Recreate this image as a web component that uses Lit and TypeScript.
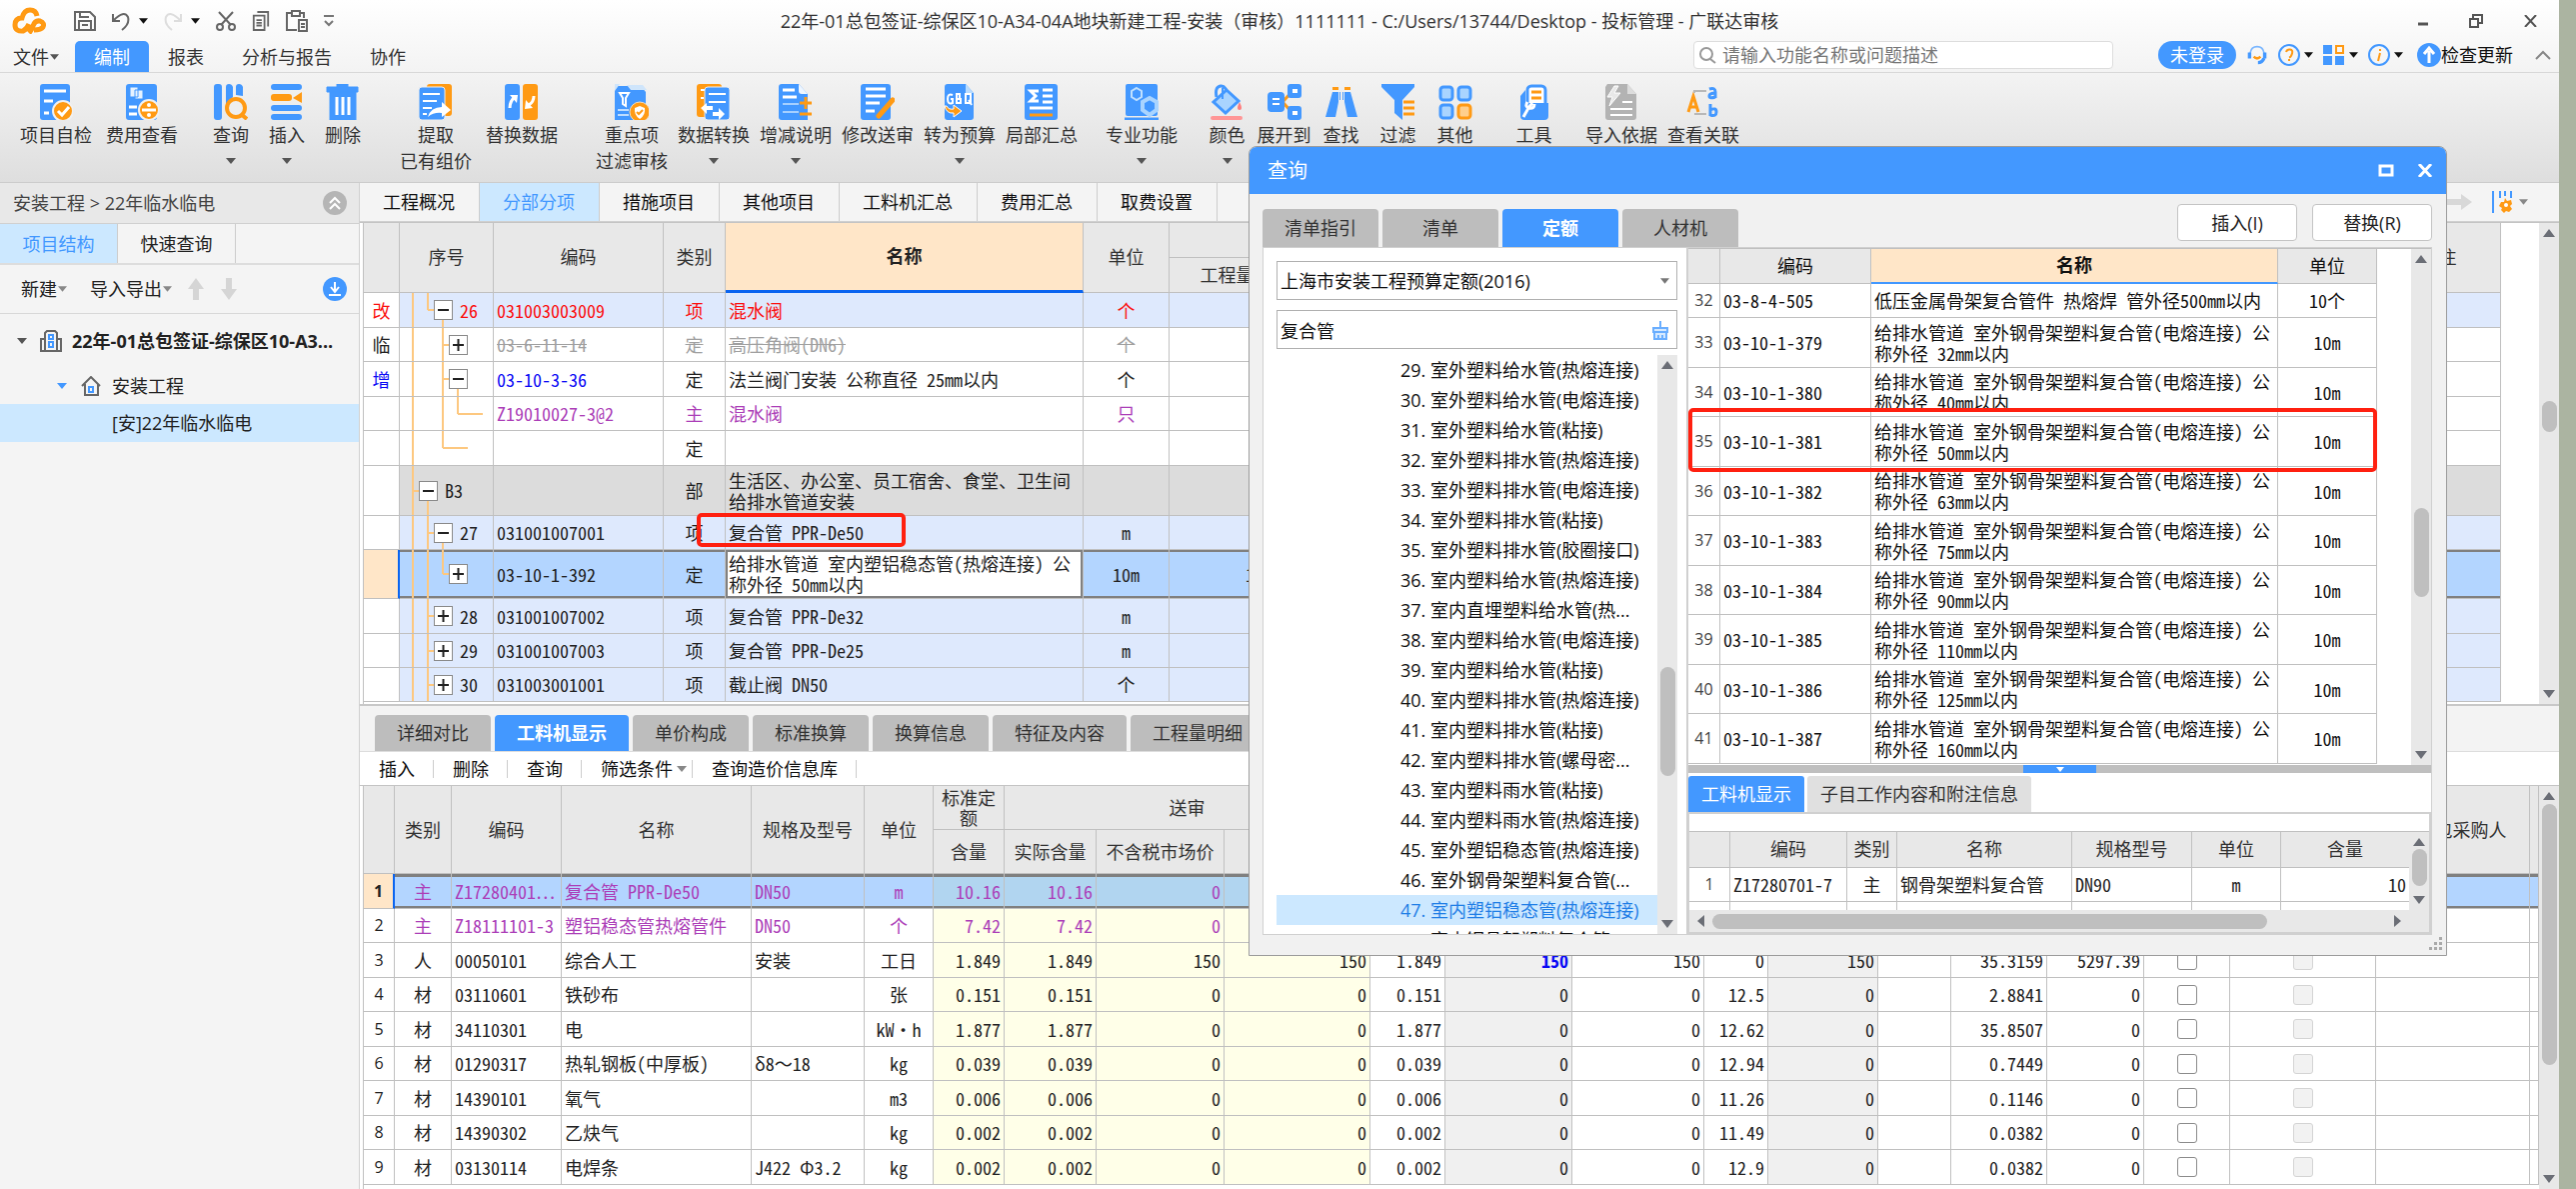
import { LitElement, html, svg, css, nothing } from "lit";
import type { TemplateResult, SVGTemplateResult } from "lit";
import { customElement } from "lit/decorators.js";
import { classMap } from "lit/directives/class-map.js";
import { styleMap } from "lit/directives/style-map.js";

const B = "#4398ff";
const O = "#ff9a14";

const base = css`
  *, *::before, *::after { box-sizing: border-box; }
  :host {
    --blue: #4398ff;
    --line: #c0c0c0;
    --pale: #cce8ff;
    --head: #e8e8e8;
    font: 18px/26px "Open Sans", "Noto Sans CJK SC", sans-serif;
    color: #222;
  }
  button, input, select {
    font: inherit;
    color: inherit;
    margin: 0;
    padding: 0;
    border: 0;
    background: none;
    white-space: nowrap;
  }
  svg { display: block; flex: none; }
  table { border-collapse: separate; border-spacing: 0; table-layout: fixed; width: 100%; }
  th, td {
    border-right: 1px solid var(--line);
    border-bottom: 1px solid var(--line);
    padding: 0 3px;
    line-height: 21px;
    overflow: hidden;
    text-align: left;
  }
  th { background: var(--head); font-weight: 400; text-align: center; color: #333; }
  td { font-family: "Noto Sans Mono CJK SC", "Noto Sans CJK SC", monospace; background: #fff; }
  .center { text-align: center; }
  .right { text-align: right; }
  .vscroll {
    width: 20px;
    flex: none;
    display: flex;
    flex-direction: column;
    align-items: center;
    background: #e8e8e8;
    padding: 6px 0;
  }
  .thumb { background: #bfbfbf; border-radius: 8px; width: 15px; }
`;

const caret = (c = "#555") =>
  html`<svg width="10" height="6" viewBox="0 0 10 6"><path d="M0 0h10L5 6z" fill=${c} /></svg>`;

const smallCaret = (c: string) =>
  html`<svg width="9" height="6" viewBox="0 0 10 6"><path d="M0 0h10L5 6z" fill=${c} /></svg>`;

const vscroll = (before: number, size: number, after: number) => html`
  <div class="vscroll">
    <svg width="12" height="8" viewBox="0 0 12 8"><path d="M0 8h12L6 0z" fill="#6b6e76" /></svg>
    <div style=${styleMap({ flex: `${before} 0 0` })}></div>
    <div class="thumb" style=${styleMap({ flex: `${size} 0 0` })}></div>
    <div style=${styleMap({ flex: `${after} 0 0` })}></div>
    <svg width="12" height="8" viewBox="0 0 12 8"><path d="M0 0h12L6 8z" fill="#6b6e76" /></svg>
  </div>`;

const cols = (widths: (number | null)[]) => html`<colgroup>
  ${widths.map((w) => (w === null ? html`<col />` : html`<col style=${styleMap({ width: `${w}px` })} />`))}
</colgroup>`;

/* ---------- ribbon ---------- */

const glyphs: Record<string, SVGTemplateResult> = {
  check: svg`<rect x="1" width="30" height="36" rx="3" fill=${B}/><path d="M5 7h22M5 17h9M5 29h5" stroke="#fff" stroke-width="3"/><circle cx="24" cy="27" r="10" fill=${O} stroke="#f0f0f0" stroke-width="2"/><path d="M19 27l4 4 7-8" fill="none" stroke="#fff" stroke-width="3"/>`,
  cost: svg`<rect x="1" width="31" height="36" rx="3" fill=${B}/><path d="M5 3h8v10H5zM10 6h8v9h-8z" fill="#e6f2ff" stroke=${B}/><path d="M4 23h8M4 30h8" stroke="#fff" stroke-width="3"/><circle cx="24" cy="26" r="10" fill=${O} stroke="#f0f0f0" stroke-width="2"/><path d="M17 26h14" stroke="#fff" stroke-width="3"/><circle cx="24" cy="21" r="2" fill="#fff"/><circle cx="24" cy="31" r="2" fill="#fff"/>`,
  query: svg`<rect width="8" height="36" rx="3" fill=${B}/><path d="M12 3q0-3 3-3t4 3v10l-7 8zM22 3q0-3 3-3t4 3v9l-7-1z" fill=${B}/><circle cx="22" cy="24" r="9" fill="#eee" stroke=${O} stroke-width="4"/><path d="M27 30l6 5" stroke=${O} stroke-width="4"/>`,
  insert: svg`<rect x="1" width="31" height="6" rx="3" fill=${B}/><rect x="1" y="10" width="21" height="7" rx="3" fill=${O}/><path d="M23 14l9-6v11z" fill=${O}/><rect x="1" y="21" width="31" height="6" rx="3" fill=${B}/><rect x="1" y="30" width="31" height="6" rx="3" fill=${B}/>`,
  trash: svg`<path d="M1 3h10V0h11v3h10v5H1zM4 8h26v28H4z" fill=${B} stroke=${B} stroke-linejoin="round"/><path d="M11 13v18M17 13v18M23 13v18" stroke="#fff" stroke-width="3"/>`,
  extract: svg`<rect x="8" width="25" height="32" rx="3" fill=${O}/><rect y="3" width="26" height="33" rx="3" fill=${B} stroke="#eee"/><path d="M4 10h17M4 17h14M4 24h9M4 30h4" stroke="#fff" stroke-width="2"/><path d="M9 33q3-10 14-10v-5l9 8-9 7v-4q-8-1-14 4z" fill="#fff"/>`,
  swap: svg`<rect width="15" height="36" rx="3" fill=${B}/><rect x="18" width="15" height="36" rx="3" fill=${O}/><path d="M5 24q0-7 5-11" stroke="#fff" stroke-width="3" fill="none"/><path d="M5 11l8 0-1 8zM20 25l1-9 7 8z" fill="#fff"/><path d="M29 12q0 6-5 9" stroke="#fff" stroke-width="3" fill="none"/>`,
  filterDoc: svg`<path d="M0 2h26l5 6v28H0z" fill=${B}/><path d="M12 1h16l4 5H16zM0 0h5L0 7z" fill="#cfe5fb"/><path d="M5 9h9l-3 5v8l-3-2v-6z" fill="none" stroke="#fff" stroke-width="2"/><path d="M3 26h11M3 31h11" stroke="#bcdcff" stroke-width="2"/><circle cx="25" cy="28" r="10" fill=${O} stroke="#f4dcb8"/><path d="M25 22l5 2q1 7-5 11-6-4-5-11z" fill="#fff"/><path d="M22 28l2 2 4-4" stroke=${O} stroke-width="2" fill="none"/>`,
  convert: svg`<rect width="25" height="33" rx="3" fill=${O}/><path d="M4 6h5M4 14h3" stroke="#fff" stroke-width="2"/><rect x="8" y="3" width="25" height="33" rx="3" fill=${B} stroke="#eee"/><path d="M12 10h17M12 18h17" stroke="#fff" stroke-width="2"/><path d="M4 24l6-5v3h6v4h-6v4zM28 30l-6-6v4h-6v4h6v4z" fill="#fff"/>`,
  plusminus: svg`<path d="M3 0h17l9 10v26H3q-3 0-3-3V3q0-3 3-3z" fill=${B}/><path d="M20 0l9 10h-6q-3 0-3-3z" fill="#eef6ff"/><path d="M4 6h12M4 13h14" stroke="#fff" stroke-width="3"/><path d="M4 20h16M4 28h16" stroke="#a5cfff" stroke-width="2"/><path d="M21 19h12M27 13v12M21 30h12" stroke=${O} stroke-width="3"/>`,
  edit: svg`<rect width="30" height="36" rx="3" fill=${B}/><path d="M5 5h20M5 12h20M5 19h14M5 27h9" stroke="#fff" stroke-width="3"/><path d="M18 32L32 16" stroke=${O} stroke-width="5" stroke-linecap="round"/>`,
  gbq: svg`<path d="M5 0h18l8 9v24q0 3-3 3H5q-3 0-3-3V3q0-3 3-3z" fill=${B}/><path d="M23 0l8 9h-8z" fill="#b8dcff"/><path d="M10 11q-5-2-5 4t5 4v-4H8M14 10v9h4v-4h-4 3v-5zM23 10h5v9h-5zM26 16l3 5" fill="none" stroke="#fff" stroke-width="2"/><path d="M2 22q2 8 9 7v4l8-6-8-6v4q-5 1-7-3z" fill=${O} stroke="#fff"/>`,
  sum: svg`<rect width="33" height="36" rx="3" fill=${B}/><path d="M14 7H6l5 5-5 5h8" fill="none" stroke="#fff" stroke-width="3"/><path d="M18 6h10M18 12h10M18 18h10M5 24h23" stroke="#fff" stroke-width="3"/><path d="M5 31h23" stroke=${O} stroke-width="3"/>`,
  gears: svg`<rect x="1" width="32" height="32" rx="2" fill=${B}/><path d="M0 35h34" stroke=${B} stroke-width="3"/><path d="M12 4l5 3v6l-5 3-5-3V7z" fill="none" stroke="#bfe0ff" stroke-width="2"/><path d="M25 14l7 4v8l-7 5-7-5v-8z" fill=${B} stroke="#a9d4ff" stroke-width="4"/>`,
  paint: svg`<path d="M6 13q-2-10 4-11t7 11" fill="none" stroke=${B} stroke-width="3"/><path d="M16 6l12 11-13 12L3 18z" fill="#a9d4ff" stroke=${B} stroke-width="3"/><path d="M12 4v11" stroke=${B} stroke-width="2"/><path d="M29 18q4 8 0 8t0-8z" fill="#ff7d7d"/><rect y="32" width="32" height="4" rx="2" fill="#ff9696"/>`,
  expand: svg`<path d="M16 17l8-9M16 19l8 9" stroke=${O} stroke-width="3"/><rect y="8" width="17" height="20" rx="4" fill=${B}/><path d="M5 15h7M5 20h7" stroke="#fff" stroke-width="2"/><rect x="20" width="14" height="14" rx="3" fill=${B}/><rect x="20" y="22" width="14" height="14" rx="3" fill=${B}/><path d="M25 5h5v4h-5zM25 27h5v4h-5z" fill="#fff"/>`,
  find: svg`<path d="M8 3h6v3H8zM20 3h6v3h-6z" fill=${O}/><path d="M8 8h6v10l-3 15H1zM26 8h-6v10l3 15h10zM15 8h1v8h-1zM18 8h1v8h-1z" fill=${B}/>`,
  funnel: svg`<path d="M0 0h33v3L21 16v20l-8-7V16L0 3z" fill=${B}/><path d="M22 18h11M22 24h11M22 30h11" stroke=${O} stroke-width="3"/>`,
  four: svg`<rect x="2" y="3" width="12" height="13" rx="3" fill="#a9d4ff" stroke=${B} stroke-width="3"/><rect x="20" y="3" width="12" height="13" rx="3" fill="#a9d4ff" stroke=${B} stroke-width="3"/><rect x="2" y="21" width="12" height="13" rx="3" fill="#a9d4ff" stroke=${B} stroke-width="3"/><rect x="20" y="21" width="12" height="13" rx="3" fill="#ffcf8c" stroke=${O} stroke-width="3"/>`,
  tool: svg`<rect x="10" y="2" width="18" height="24" rx="4" fill="#fff" stroke=${B} stroke-width="3"/><path d="M14 8h10M14 14h10" stroke=${O} stroke-width="3"/><path d="M3 12l5-6v13h23v13q0 4-4 4H7q-4 0-4-4z" fill=${B}/><path d="M15 19l-4 5-5 9M10 18q-3 5 2 6t5-4" fill="none" stroke="#fff" stroke-width="3"/>`,
  basis: svg`<path d="M3 0h20l9 10v23q0 3-3 3H4q-3 0-3-3V3z" fill="#b3b3b3"/><path d="M23 0l9 10h-9z" fill="#dcdcdc"/><path d="M10 2L3 13h5l-3 9 11-13h-6l4-7z" fill="#e8e8e8" stroke="#fff"/><path d="M18 18h10M6 25h22M6 31h22" stroke="#fff" stroke-width="2"/>`,
  relate: svg`<path d="M2 28l5-16 5 16M4 23h7" fill="none" stroke=${O} stroke-width="3"/><path d="M8 9V7h12M8 30h12" fill="none" stroke="#b8b8b8" stroke-width="2"/><path d="M23 5q6-2 6 3v6M29 9q-6 0-6 3t6 1M24 20v12M24 26q6-3 6 2t-6 3" fill="none" stroke=${B} stroke-width="3"/>`,
};

type Tool = [string, string, string?];
const ribbon: { cell: number; gap: number; tools: Tool[] }[] = [
  { cell: 86, gap: 13, tools: [["check", "项目自检"], ["cost", "费用查看"]] },
  { cell: 56, gap: 18, tools: [["query", "查询", "▾"], ["insert", "插入", "▾"], ["trash", "删除"]] },
  { cell: 86, gap: 22, tools: [["extract", "提取", "已有组价"], ["swap", "替换数据"]] },
  { cell: 82, gap: 26, tools: [["filterDoc", "重点项", "过滤审核"], ["convert", "数据转换", "▾"], ["plusminus", "增减说明", "▾"], ["edit", "修改送审"], ["gbq", "转为预算", "▾"], ["sum", "局部汇总"]] },
  { cell: 82, gap: 18, tools: [["gears", "专业功能", "▾"]] },
  { cell: 57, gap: 16, tools: [["paint", "颜色", "▾"], ["expand", "展开到"], ["find", "查找"], ["funnel", "过滤"], ["four", "其他"]] },
  { cell: 57, gap: 22, tools: [["tool", "工具"]] },
  { cell: 82, gap: 18, tools: [["basis", "导入依据"], ["relate", "查看关联"]] },
];

@customElement("app-header")
export class AppHeader extends LitElement {
  static styles = [base, css`
    :host { display: block; }
    .top { background: linear-gradient(#fff, #f3f3f3); height: 73px; border-bottom: 1px solid #d8d8d8; }
    .titlebar { display: grid; grid-template-columns: 1fr auto 1fr; height: 41px; align-items: center; }
    .quick { display: flex; align-items: center; padding-left: 12px; }
    .quick svg { margin-right: 16px; }
    .quick .logo { margin-right: 28px; }
    .quick .near { margin-right: 9px; }
    .title { color: #333; }
    .win { display: flex; justify-content: flex-end; align-items: center; gap: 41px; padding-right: 22px; }
    .menubar { display: flex; height: 31px; align-items: stretch; }
    .menu { padding: 0 19px; display: flex; align-items: center; color: #333; }
    .menu.file { padding: 0 16px 0 13px; gap: 1px; width: 75px; }
    .menu.on { background: var(--blue); color: #fff; border-radius: 5px 5px 0 0; }
    .fill { flex: 1; }
    .search { display: flex; align-items: center; gap: 6px; width: 420px; height: 28px; background: #fff; border: 1px solid #ddd; border-radius: 4px; padding-left: 4px; }
    .search input { flex: 1; outline: 0; }
    .search input::placeholder { color: #777; opacity: 1; }
    .right-tools { display: flex; align-items: center; gap: 10px; height: 28px; padding: 0 8px 0 45px; }
    .pair { display: flex; align-items: center; gap: 4px; }
    .login { background: var(--blue); color: #fff; border-radius: 14px; height: 28px; width: 78px; }
    .update { display: flex; align-items: center; margin-left: 4px; color: #111; }
    .fold { margin-left: 12px; }
    .ribbon { background: linear-gradient(#f3f3f3, #dedede); height: 110px; border-bottom: 1px solid #ccc; display: flex; padding-top: 11px; }
    .group { display: flex; }
    .tool { display: flex; flex-direction: column; align-items: center; color: #333; }
    .tool svg { margin-bottom: 2px; }
    .tool .down { padding-top: 10px; }
  `];

  render() {
    return html`
      <header class="top">
        <div class="titlebar">
          <div class="quick">
            <svg class="logo" width="34" height="27" viewBox="0 0 34 27"><path d="M12 24Q3 25 3 18q0-7 7-7Q12 3 18 3q6 0 7 6M11 24q4-2 6-7M17 26q3-3 4-7 2-6 7-5 5 2 3 6-2 3-9 3" fill="none" stroke=${O} stroke-width="5"/></svg>
            <svg width="22" height="20" viewBox="0 0 22 20" fill="none" stroke="#666" stroke-width="2"><path d="M1 1h15l5 5v13H1zM6 1v5h9M5 19v-9h12v9M8 14h6"/></svg>
            <svg class="near" width="18" height="20" viewBox="0 0 18 20" fill="none" stroke="#666" stroke-width="2"><path d="M1 3v7h7M2 9Q12-1 16 6q2 7-6 13"/></svg>
            ${smallCaret("#111")}
            <svg class="near" width="18" height="20" viewBox="0 0 18 20" fill="none" stroke="#ddd" stroke-width="2"><path d="M17 3v7h-7M16 9Q6-1 2 6q-2 7 6 13"/></svg>
            ${smallCaret("#111")}
            <svg width="20" height="20" viewBox="0 0 20 20" fill="none" stroke="#666" stroke-width="2"><path d="M3 1l12 13M17 1L5 14"/><circle cx="4" cy="16" r="3"/><circle cx="16" cy="16" r="3"/></svg>
            <svg width="18" height="22" viewBox="0 0 20 22" fill="none" stroke="#666" stroke-width="2"><path d="M6 1h12v16M2 5h12v16H2zM5 10h6M5 13h6M5 16h6"/></svg>
            <svg width="22" height="23" viewBox="0 0 22 23" fill="none" stroke="#666" stroke-width="2"><path d="M5 4H1v17h10M6 2h8v5H6zM14 4h4v5M13 11h8v11h-8zM15 15h4M15 18h4"/></svg>
            <svg width="10" height="12" viewBox="0 0 10 12" fill="none" stroke="#777" stroke-width="2"><path d="M0 1h10M1 6l4 4 4-4"/></svg>
          </div>
          <div class="title">22年-01总包签证-综保区10-A34-04A地块新建工程-安装（审核）1111111 - C:/Users/13744/Desktop - 投标管理 - 广联达审核</div>
          <div class="win">
            <button aria-label="最小化"><svg width="10" height="14" viewBox="0 0 10 14"><path d="M0 10h10" stroke="#555" stroke-width="3"/></svg></button>
            <button aria-label="还原"><svg width="14" height="14" viewBox="0 0 14 14" fill="none" stroke="#555" stroke-width="2"><path d="M4 4V1h9v8h-3M1 5h8v8H1z"/></svg></button>
            <button aria-label="关闭"><svg width="13" height="12" viewBox="0 0 13 12" stroke="#555" stroke-width="2"><path d="M1 0l11 12M12 0L1 12"/></svg></button>
          </div>
        </div>
        <nav class="menubar">
          <button class="menu file">文件${smallCaret("#555")}</button>
          <button class="menu on">编制</button>
          <button class="menu">报表</button>
          <button class="menu">分析与报告</button>
          <button class="menu">协作</button>
          <div class="fill"></div>
          <label class="search">
            <svg width="18" height="18" viewBox="0 0 18 18" fill="none" stroke="#999" stroke-width="2"><circle cx="8" cy="8" r="6"/><path d="M12 13l5 4"/></svg>
            <input placeholder="请输入功能名称或问题描述" aria-label="搜索功能" />
          </label>
          <div class="right-tools">
            <button class="login">未登录</button>
            <svg width="22" height="22" viewBox="0 0 26 24" fill="none"><path d="M5 15V9Q6 2 13 2t8 7v6" stroke="#7ab6ff" stroke-width="2"/><path d="M4 9v7M22 9v7M21 16q-2 5-7 5" stroke=${B} stroke-width="4"/><path d="M9 14q4 4 8 0" stroke=${O} stroke-width="3"/></svg>
            <div class="pair">
              <svg width="22" height="22" viewBox="0 0 22 22" fill="none"><circle cx="11" cy="11" r="10" stroke=${B} stroke-width="2"/><path d="M8 8q1-3 4-2.500t2 4-3 4M11 15v2" stroke=${O} stroke-width="2"/></svg>
              ${smallCaret("#111")}
            </div>
            <div class="pair">
              <svg width="22" height="20" viewBox="0 0 22 20"><path d="M0 0h9v9H0zM0 11h9v9H0zM12 11h9v9h-9z" fill=${B}/><path d="M13 1h7v7h-7z" fill="none" stroke=${O} stroke-width="2"/></svg>
              ${smallCaret("#111")}
            </div>
            <div class="pair">
              <svg width="22" height="22" viewBox="0 0 22 22" fill="none"><circle cx="11" cy="11" r="10" stroke=${B} stroke-width="2"/><path d="M12 5v2M12 9l-2 8" stroke=${O} stroke-width="2"/></svg>
              ${smallCaret("#111")}
            </div>
            <button class="update"><svg width="24" height="26" viewBox="0 0 24 26"><circle cx="12" cy="13" r="12" fill=${B}/><path d="M12 21V9M7 12l5-6 5 6" stroke="#fff" stroke-width="3" fill="none"/></svg>检查更新</button>
            <svg class="fold" width="16" height="10" viewBox="0 0 16 10"><path d="M1 9l7-7 7 7" fill="none" stroke="#888" stroke-width="2"/></svg>
          </div>
        </nav>
      </header>
      <div class="ribbon">
        ${ribbon.map((g) => html`<div class="group" style=${styleMap({ marginLeft: `${g.gap}px` })}>
          ${g.tools.map(([icon, name, extra]) => html`<button class="tool" style=${styleMap({ width: `${g.cell}px` })}>
            <svg width="34" height="36" viewBox="0 0 34 36">${glyphs[icon]}</svg>
            <span>${name}</span>
            ${extra === "▾" ? html`<span class="down">${caret()}</span>` : extra ? html`<span>${extra}</span>` : nothing}
          </button>`)}
        </div>`)}
      </div>`;
  }
}

@customElement("app-side")
export class AppSide extends LitElement {
  static styles = [base, css`
    :host { display: flex; flex-direction: column; width: 360px; flex: none; background: #f4f4f4; border-right: 1px solid #d0d0d0; }
    .crumb { height: 40px; background: #e8e8e8; display: flex; align-items: center; justify-content: space-between; padding: 0 11px 0 13px; color: #444; }
    .tabs { display: flex; height: 42px; border-top: 1px solid #d0d0d0; border-bottom: 2px solid #ddd; }
    .tabs button { width: 118px; border-right: 1px solid #ccc; }
    .tabs .on { background: var(--pale); color: var(--blue); }
    .bar { height: 49px; display: flex; align-items: center; padding: 0 11px 0 21px; border-bottom: 1px solid #d8d8d8; }
    .bar button { display: flex; align-items: center; gap: 1px; margin-right: 23px; }
    .bar .arrow { margin-right: 15px; }
    .bar .data { margin-right: 15px; }
    .bar .go { margin: 0 0 0 auto; }
    .node { display: flex; align-items: center; height: 36px; color: #222; }
    .root { height: 54px; padding-left: 17px; font-weight: 700; }
    .root svg:last-of-type { margin: 0 10px 0 13px; }
    .unit { padding-left: 57px; }
    .unit svg:last-of-type { margin: 0 10px 0 14px; }
    .leaf { height: 38px; padding-left: 112px; background: var(--pale); }
  `];

  render() {
    return html`
      <div class="crumb">安装工程 &gt; 22年临水临电
        <svg width="25" height="25" viewBox="0 0 25 25"><circle cx="12" cy="12" r="12" fill="#b5b5b5"/><path d="M7 12l5-5 5 5M7 18l5-5 5 5" fill="none" stroke="#fff" stroke-width="2"/></svg>
      </div>
      <div class="tabs"><button class="on">项目结构</button><button>快速查询</button></div>
      <div class="bar">
        <button>新建${smallCaret("#888")}</button>
        <button class="data">导入导出${smallCaret("#888")}</button>
        <svg class="arrow" width="18" height="22" viewBox="0 0 18 22"><path d="M9 0l8 11h-5v11H6V11H1z" fill="#d5d5d5"/></svg>
        <svg class="arrow" width="18" height="22" viewBox="0 0 18 22"><path d="M9 22l8-11h-5V0H6v11H1z" fill="#d5d5d5"/></svg>
        <svg class="go" width="25" height="25" viewBox="0 0 25 25"><circle cx="12" cy="12" r="12" fill=${B}/><path d="M12 5v9M8 10l4 5 4-5M6 18h12" fill="none" stroke="#fff" stroke-width="2"/></svg>
      </div>
      <div class="node root">
        ${caret()}
        <svg width="22" height="22" viewBox="0 0 22 22" fill="none" stroke="#666" stroke-width="2"><path d="M5 21V3l2-2h8l2 2v18M1 21V9h4M17 9h4v12M0 21h22"/><path d="M9 5h4v4H9zM9 12h4v5H9z" stroke=${B}/></svg>
        22年-01总包签证-综保区10-A3...
      </div>
      <div class="node unit">
        ${caret(B)}
        <svg width="21" height="20" viewBox="0 0 21 20" fill="none" stroke="#666" stroke-width="2"><path d="M1 10l9-9 9 9M4 8v11h13V8"/><path d="M8 11h4v5H8z" stroke=${B}/></svg>
        安装工程
      </div>
      <div class="node leaf">[安]22年临水临电</div>`;
  }
}

/* ---------- item grid ---------- */

interface Item {
  h: number;
  tone?: string;
  mark?: string;
  ink?: string;
  codeInk?: string;
  markInk?: string;
  full: number[];
  end?: number;
  arm?: [number, number];
  box?: [number, string];
  drop?: number;
  no?: string;
  code?: string;
  kind: string;
  name?: string;
  unit?: string;
  qty?: string;
}

const items: Item[] = [
  { h: 35, tone: "blue", mark: "改", markInk: "red", ink: "red", full: [13], end: 28, arm: [28, 34], box: [43, "−"], drop: 43, no: "26", code: "031003003009", kind: "项", name: "混水阀", unit: "个" },
  { h: 34, mark: "临", ink: "struck", full: [13, 43], arm: [43, 49], box: [58, "+"], code: "03-6-11-14", kind: "定", name: "高压角阀(DN6)", unit: "个" },
  { h: 35, mark: "增", markInk: "navy", codeInk: "navy", full: [13, 43], arm: [43, 49], box: [58, "−"], drop: 58, code: "03-10-3-36", kind: "定", name: "法兰阀门安装 公称直径 25mm以内", unit: "个" },
  { h: 34, ink: "purple", full: [13, 43], end: 58, arm: [58, 83], code: "Z19010027-3@2", kind: "主", name: "混水阀", unit: "只" },
  { h: 35, full: [13], end: 43, arm: [43, 68], kind: "定" },
  { h: 50, tone: "gray", full: [13], arm: [13, 19], box: [28, "−"], drop: 28, no: "B3", kind: "部", name: "生活区、办公室、员工宿舍、食堂、卫生间给排水管道安装" },
  { h: 34, tone: "blue", full: [13, 28], arm: [28, 34], box: [43, "−"], drop: 43, no: "27", code: "031001007001", kind: "项", name: "复合管 PPR-De50", unit: "m" },
  { h: 49, tone: "sel", full: [13, 28], end: 43, arm: [43, 49], box: [58, "+"], code: "03-10-1-392", kind: "定", name: "给排水管道 室内塑铝稳态管(热熔连接) 公称外径 50mm以内", unit: "10m", qty: "1.00" },
  { h: 35, tone: "blue", full: [13, 28], arm: [28, 34], box: [43, "+"], no: "28", code: "031001007002", kind: "项", name: "复合管 PPR-De32", unit: "m" },
  { h: 34, tone: "blue", full: [13, 28], arm: [28, 34], box: [43, "+"], no: "29", code: "031001007003", kind: "项", name: "复合管 PPR-De25", unit: "m" },
  { h: 34, tone: "blue", full: [13, 28], arm: [28, 34], box: [43, "+"], no: "30", code: "031003001001", kind: "项", name: "截止阀 DN50", unit: "个" },
];

function branch(r: Item): TemplateResult {
  const mid = Math.floor(r.h / 2);
  const d = [
    ...r.full.map((x) => `M${x} 0V${r.h}`),
    r.end ? `M${r.end} 0V${mid}` : "",
    r.arm ? `M${r.arm[0]} ${mid}H${r.arm[1]}` : "",
    r.drop ? `M${r.drop} ${mid}V${r.h}` : "",
  ].join("");
  return html`<div class="tree" style=${styleMap({ height: `${r.h - 1}px`, paddingLeft: r.box ? `${r.box[0] - 9}px` : "0" })}>
    <svg class="lines" width="94" height=${r.h} viewBox="0 0 94 ${r.h}"><path d=${d} fill="none" stroke="#fdc880" stroke-width="2"/></svg>
    ${r.box ? html`<button class="box" aria-label=${r.box[1] === "+" ? "展开" : "折叠"}>
      <svg width="17" height="18" viewBox="0 0 17 18"><path d=${r.box[1] === "+" ? "M3 9h11M8.500 3v12" : "M3 9h11"} stroke="#222" stroke-width="2"/></svg></button>` : nothing}
    ${r.no ? html`<span class="no">${r.no}</span>` : nothing}
  </div>`;
}

/* ---------- resource grid ---------- */

const resources: string[][] = [
  ["主", "Z17280401…", "复合管 PPR-De50", "DN50", "m", "10.16", "10.16", "0", "", "", "", "", "", "", "", "", ""],
  ["主", "Z18111101-3", "塑铝稳态管热熔管件", "DN50", "个", "7.42", "7.42", "0", "", "", "", "", "", "", "", "", ""],
  ["人", "00050101", "综合人工", "安装", "工日", "1.849", "1.849", "150", "150", "1.849", "150", "150", "0", "150", "", "35.3159", "5297.39"],
  ["材", "03110601", "铁砂布", "", "张", "0.151", "0.151", "0", "0", "0.151", "0", "0", "12.5", "0", "", "2.8841", "0"],
  ["材", "34110301", "电", "", "kW·h", "1.877", "1.877", "0", "0", "1.877", "0", "0", "12.62", "0", "", "35.8507", "0"],
  ["材", "01290317", "热轧钢板(中厚板)", "δ8～18", "kg", "0.039", "0.039", "0", "0", "0.039", "0", "0", "12.94", "0", "", "0.7449", "0"],
  ["材", "14390101", "氧气", "", "m3", "0.006", "0.006", "0", "0", "0.006", "0", "0", "11.26", "0", "", "0.1146", "0"],
  ["材", "14390302", "乙炔气", "", "kg", "0.002", "0.002", "0", "0", "0.002", "0", "0", "11.49", "0", "", "0.0382", "0"],
  ["材", "03130114", "电焊条", "J422 Φ3.2", "kg", "0.002", "0.002", "0", "0", "0.002", "0", "0", "12.9", "0", "", "0.0382", "0"],
];

@customElement("app-workspace")
export class AppWorkspace extends LitElement {
  static styles = [base, css`
    :host { display: flex; flex-direction: column; flex: 1; min-width: 0; background: #fff; }
    .tabs { display: flex; height: 39px; flex: none; background: #f4f4f4; border-bottom: 1px solid #d0d0d0; }
    .tabs button { padding: 0 24px 0 23px; border-right: 1px solid #ccc; color: #111; }
    .tabs .on { background: var(--pale); color: var(--blue); }
    .tabs .side { margin-left: auto; display: flex; align-items: center; gap: 19px; padding-right: 31px; }
    .tabs .view { display: flex; align-items: center; gap: 5px; }
    .area { display: flex; padding-left: 3px; border-top: 1px solid #c4c4c4; overflow: hidden; }
    .area .grid { flex: 1; min-width: 0; border-left: 1px solid var(--line); }
    .items { height: 484px; flex: none; border-bottom: 2px solid #c8c8c8; }
    .items .grid { margin-right: 38px; }
    th.name { background: #ffe6c8; font-weight: 700; border-bottom: 3px solid #0a64f0; color: #222; }
    .blue td { background: #dee9fd; }
    .gray td { background: #dcdcdc; }
    tr td.mark { background: #fff; }
    tr.sel td { background: #b3d5ff; box-shadow: inset 0 2px #808080, inset 0 -2px #808080; }
    tr.sel td.mark { background: #ffe6c8; box-shadow: none; border-right: 2px solid #0a64f0; }
    tr.sel td.title { background: #fff; box-shadow: inset 0 0 0 2px #808080; }
    td.mark { padding: 0; text-align: center; }
    .red { color: #fb1010; }
    .navy { color: #0b0bf5; }
    .purple { color: #ac3fb8; }
    .struck { color: #a0a0a0; text-decoration: line-through; }
    td.branch { padding: 0; }
    .tree { position: relative; display: flex; align-items: center; }
    .lines { position: absolute; left: 0; top: 0; }
    .box { position: relative; width: 19px; height: 20px; border: 1px solid #8a8a8a; background: #fff; }
    .no { margin-left: 7px; }
    .subtabs { background: #f3f3f3; flex: none; display: flex; gap: 4px; padding: 9px 0 0 15px; height: 46px; border-bottom: 1px solid #ddd; }
    .subtabs button { background: #bdbdbd; border-radius: 4px 4px 0 0; padding: 0 22px; color: #333; }
    .subtabs .on { background: var(--blue); color: #fff; font-weight: 700; }
    .bar { height: 33px; flex: none; display: flex; align-items: center; }
    .bar button { display: flex; align-items: center; gap: 4px; padding: 0 18px 0 19px; color: #111; border-right: 1px solid #ccc; height: 18px; line-height: 18px; }
    .bar .menu { padding-right: 5px; }
    .res { flex: 1; min-height: 0; }
    .res th { line-height: 20px; }
    .res td.idx { text-align: center; font-family: "Open Sans", "Noto Sans CJK SC", sans-serif; font-size: 16px; padding: 0; }
    .res tr.first td { background: #b3d5ff; box-shadow: inset 0 3px #808080, inset 0 -2px #808080; }
    .res tr.first td.pale { background: #b1d5f0; }
    .res tr.first td.idx { background: #ffe6c8; box-shadow: none; font-weight: 700; border-right: 2px solid #0a64f0; }
    .res td.pale { background: #ffffe8; }
    .res td.shade { background: #f0f0f0; }
    .res td.strong { color: #0b0bf5; font-weight: 700; }
    td input { appearance: none; display: block; margin: 0 auto; width: 20px; height: 20px; border: 1px solid #8c8c8c; border-radius: 3px; background: #fff; }
    td input:disabled { border-color: #d4d4d4; background: #f2f2f2; }
  `];

  private resource(r: string[], i: number) {
    const h = i % 2 ? 34 : 35;
    return html`<tr class=${i === 0 ? "first" : ""} style=${styleMap({ height: `${h}px` })}>
      <td class="idx">${i + 1}</td>
      ${r.map((v, c) => html`<td class=${classMap({
        purple: i < 2,
        center: c === 0 || c === 4,
        right: c > 4,
        pale: c > 4 && c < 9,
        shade: c === 10 || c === 13,
        strong: c === 10 && v === "150",
      })}>${v}</td>`)}
      <td><input type="checkbox" aria-label="选择第${i + 1}行" /></td>
      <td><input type="checkbox" disabled aria-label="第${i + 1}行锁定" /></td>
      <td></td><td></td>
    </tr>`;
  }

  render() {
    const tabs = ["工程概况", "分部分项", "措施项目", "其他项目", "工料机汇总", "费用汇总", "取费设置"];
    const sub = ["详细对比", "工料机显示", "单价构成", "标准换算", "换算信息", "特征及内容", "工程量明细"];
    return html`
      <div class="tabs">
        ${tabs.map((t, i) => html`<button class=${i === 1 ? "on" : ""}>${t}</button>`)}
        <div class="side">
          <svg width="34" height="18" viewBox="0 0 34 18"><path d="M8 6h14V1l11 8-11 8v-5H8z" fill="#d8d8d8"/></svg>
          <div class="view">
            <svg width="22" height="22" viewBox="0 0 22 22"><path d="M1 0v22M8 0v7M13 0v5M19 0v7" stroke=${B} stroke-width="2"/><path d="M13 7l2 3 4-1 1 4-2 2 2 3-3 3-3-1-2 2-3-3 1-2-3-2 2-4 3 0z" fill=${O}/><circle cx="14" cy="14" r="2" fill="#fff"/></svg>
            ${smallCaret("#888")}
          </div>
        </div>
      </div>
      <div class="area items">
        <div class="grid"><table>
          ${cols([36, 94, 170, 62, 358, 86, 116, null, 124])}
          <thead>
            <tr style=${styleMap({ height: "35px" })}>
              <th rowspan="2"></th><th rowspan="2">序号</th><th rowspan="2">编码</th><th rowspan="2">类别</th>
              <th rowspan="2" class="name">名称</th><th rowspan="2">单位</th><th></th><th rowspan="2"></th><th rowspan="2">备注</th>
            </tr>
            <tr style=${styleMap({ height: "35px" })}><th>工程量</th></tr>
          </thead>
          <tbody>
            ${items.map((r) => html`<tr class=${r.tone ?? ""} style=${styleMap({ height: `${r.h}px` })}>
              <td class="mark ${r.markInk ?? ""}">${r.mark ?? ""}</td>
              <td class="branch ${r.ink === "red" ? "red" : ""}">${branch(r)}</td>
              <td class=${r.codeInk ?? r.ink ?? ""}>${r.code ?? ""}</td>
              <td class="center ${r.ink ?? ""}">${r.kind}</td>
              <td class="title ${r.ink ?? ""}">${r.name ?? ""}</td>
              <td class="center ${r.ink ?? ""}">${r.unit ?? ""}</td>
              <td class="right">${r.qty ?? ""}</td><td></td><td></td>
            </tr>`)}
          </tbody>
        </table></div>
        ${vscroll(157, 30, 247)}
      </div>
      <div class="subtabs">${sub.map((t, i) => html`<button class=${i === 1 ? "on" : ""}>${t}</button>`)}</div>
      <div class="bar">
        <button>插入</button><button>删除</button><button>查询</button>
        <button class="menu">筛选条件${caret("#888")}</button><button>查询造价信息库</button>
      </div>
      <div class="area res">
        <div class="grid"><table>
          ${cols([31, 57, 110, 190, 113, 69, 71, 92, 128, 146, 75, 127, 132, 64, 110, null, 96, 97, 86, 146, 154, 9])}
          <thead>
            <tr style=${styleMap({ height: "44px" })}>
              <th rowspan="2"></th><th rowspan="2">类别</th><th rowspan="2">编码</th><th rowspan="2">名称</th>
              <th rowspan="2">规格及型号</th><th rowspan="2">单位</th><th>标准定额</th><th colspan="3">送审</th>
              <th colspan="5"></th><th rowspan="2"></th><th rowspan="2"></th><th rowspan="2"></th>
              <th rowspan="2"></th><th rowspan="2"></th><th rowspan="2">发承包采购人</th><th rowspan="2"></th>
            </tr>
            <tr style=${styleMap({ height: "44px" })}>
              <th>含量</th><th>实际含量</th><th>不含税市场价</th><th></th><th></th><th></th><th></th><th></th><th></th>
            </tr>
          </thead>
          <tbody>${resources.map((r, i) => this.resource(r, i))}</tbody>
        </table></div>
        ${vscroll(4, 268, 113)}
      </div>`;
  }
}

/* ---------- query window ---------- */

const chapters = [
  "29. 室外塑料给水管(热熔连接)", "30. 室外塑料给水管(电熔连接)", "31. 室外塑料给水管(粘接)",
  "32. 室外塑料排水管(热熔连接)", "33. 室外塑料排水管(电熔连接)", "34. 室外塑料排水管(粘接)",
  "35. 室外塑料排水管(胶圈接口)", "36. 室内塑料给水管(热熔连接)", "37. 室内直埋塑料给水管(热...",
  "38. 室内塑料给水管(电熔连接)", "39. 室内塑料给水管(粘接)", "40. 室内塑料排水管(热熔连接)",
  "41. 室内塑料排水管(粘接)", "42. 室内塑料排水管(螺母密...", "43. 室内塑料雨水管(粘接)",
  "44. 室内塑料雨水管(热熔连接)", "45. 室外塑铝稳态管(热熔连接)", "46. 室外钢骨架塑料复合管(...",
  "47. 室内塑铝稳态管(热熔连接)", "48. 室内钢骨架塑料复合管(...",
];

const quotas: [number, string, string, string][] = [
  [32, "03-8-4-505", "低压金属骨架复合管件 热熔焊 管外径500mm以内", "10个"],
  ...[32, 40, 50, 63, 75, 90, 110, 125, 160].map((d, i): [number, string, string, string] => [
    33 + i, `03-10-1-${379 + i}`, `给排水管道 室外钢骨架塑料复合管(电熔连接) 公称外径 ${d}mm以内`, "10m",
  ]),
];

@customElement("query-window")
export class QueryWindow extends LitElement {
  static styles = [base, css`
    :host { display: flex; flex-direction: column; background: #f1f1f1; border: 1px solid #9c9c9c; border-radius: 8px 8px 0 0; overflow: hidden; }
    .title { height: 47px; flex: none; background: var(--blue); color: #fff; font-size: 20px; display: flex; align-items: center; padding: 0 13px 0 18px; }
    .title span { flex: 1; }
    .title button + button { margin-left: 23px; }
    .head { display: flex; height: 53px; flex: none; padding: 0 14px 0 13px; align-items: flex-end; gap: 4px; }
    .tab { background: #bdbdbd; width: 116px; height: 38px; border-radius: 4px 4px 0 0; color: #333; }
    .tab.on { background: var(--blue); color: #fff; font-weight: 700; }
    .act { width: 120px; height: 37px; background: #fff; border: 1px solid #c4c4c4; border-radius: 4px; margin: 0 0 6px 11px; }
    .act.first { margin-left: auto; }
    .panel { flex: 1; min-height: 0; margin: 0 14px 0 13px; display: flex; background: #fff; border: 1px solid #d0d0d0; }
    .left { width: 425px; flex: none; display: flex; flex-direction: column; padding: 13px 9px 0 13px; border-right: 2px solid #d0d0d0; }
    .field { display: flex; align-items: center; height: 39px; flex: none; border: 1px solid #b0b0b0; margin-bottom: 10px; padding-right: 7px; }
    .field select, .field input { flex: 1; appearance: none; outline: 0; height: 100%; padding-left: 3px; color: #111; }
    .listwrap { flex: 1; min-height: 0; display: flex; margin-top: -4px; }
    ul { flex: 1; min-width: 0; margin: 0; padding: 0; list-style: none; overflow: hidden; }
    li { height: 30px; line-height: 30px; padding-left: 124px; white-space: nowrap; color: #111; }
    li.on { background: var(--pale); color: #1f7ee6; }
    .side { flex: 1; min-width: 0; display: flex; flex-direction: column; }
    .quota { flex: 1; min-height: 0; display: flex; overflow: hidden; border-top: 1px solid var(--line); }
    .quota .grid { flex: 1; min-width: 0; margin-right: 34px; }
    .quota td, .quota th { color: #111; }
    td.idx { font-family: "Open Sans", "Noto Sans CJK SC", sans-serif; font-size: 16px; text-align: center; padding: 0; color: #444; }
    th.name { background: #ffe6c8; font-weight: 700; border-bottom: 2px solid var(--blue); }
    .split { height: 8px; flex: none; background: #bfbfbf; display: flex; justify-content: center; margin-bottom: 3px; }
    .split span { width: 73px; background: var(--blue); display: flex; justify-content: center; }
    .subtabs { display: flex; gap: 3px; height: 36px; flex: none; }
    .subtabs button { background: #e0e0e0; border-radius: 3px 3px 0 0; padding: 0 13px; color: #333; }
    .subtabs .on { background: var(--blue); color: #fff; }
    .detail { height: 122px; flex: none; border: 2px solid #d0d0d0; border-left-width: 1px; padding-top: 17px; display: flex; flex-direction: column; }
    .rows { height: 79px; flex: none; display: flex; overflow: hidden; border-top: 1px solid var(--line); }
    .rows .grid { flex: 1; min-width: 0; }
    .rows th:last-child, .rows td:last-child { border-right: 0; }
    .hscroll { flex: 1; background: #e8e8e8; display: flex; align-items: center; padding: 0 28px 0 8px; gap: 8px; }
    .hthumb { height: 15px; background: #bfbfbf; border-radius: 8px; }
    .foot { height: 20px; flex: none; display: flex; justify-content: flex-end; padding: 2px 4px 0 0; }
  `];

  render() {
    return html`
      <div class="title"><span>查询</span>
        <button aria-label="最大化"><svg width="16" height="13" viewBox="0 0 16 13"><path d="M2 2h12v9H2z" fill="none" stroke="#fff" stroke-width="3"/></svg></button>
        <button aria-label="关闭查询"><svg width="16" height="13" viewBox="0 0 16 13"><path d="M2 0l12 13M14 0L2 13" stroke="#fff" stroke-width="3"/></svg></button>
      </div>
      <div class="head">
        ${["清单指引", "清单", "定额", "人材机"].map((t, i) => html`<button class="tab ${i === 2 ? "on" : ""}">${t}</button>`)}
        <button class="act first">插入(I)</button><button class="act">替换(R)</button>
      </div>
      <div class="panel">
        <div class="left">
          <div class="field"><select aria-label="定额库"><option>上海市安装工程预算定额(2016)</option></select>${smallCaret("#777")}</div>
          <div class="field"><input aria-label="关键字" .value=${"复合管"} />
            <button aria-label="清空"><svg width="18" height="20" viewBox="0 0 18 20"><path d="M9 1v6M2 8h14v4H2zM3 12v7h12v-7M7 15v4M11 15v4" fill="#d5e9ff" stroke="#6aaeff" stroke-width="2"/></svg></button>
          </div>
          <div class="listwrap">
            <ul>${chapters.map((t) => html`<li class=${t.startsWith("47") ? "on" : ""}>${t}</li>`)}</ul>
            ${vscroll(296, 108, 143)}
          </div>
        </div>
        <div class="side">
          <div class="quota">
            <div class="grid"><table>
              ${cols([32, 151, null, 99])}
              <thead><tr style=${styleMap({ height: "35px" })}><th></th><th>编码</th><th class="name">名称</th><th>单位</th></tr></thead>
              <tbody>${quotas.map(([n, code, name, unit], i) => html`<tr style=${styleMap({ height: `${i === 0 ? 34 : i % 2 ? 50 : 49}px` })}>
                <td class="idx">${n}</td><td>${code}</td><td>${name}</td><td class="center">${unit}</td>
              </tr>`)}</tbody>
            </table></div>
            ${vscroll(220, 80, 138)}
          </div>
          <div class="split"><span><svg width="8" height="8" viewBox="0 0 8 8"><path d="M0 2h8L4 7z" fill="#fff"/></svg></span></div>
          <div class="subtabs"><button class="on">工料机显示</button><button>子目工作内容和附注信息</button></div>
          <div class="detail">
            <div class="rows">
              <div class="grid"><table>
                ${cols([41, 117, 50, 175, 120, 89, null])}
                <thead><tr style=${styleMap({ height: "36px" })}><th></th><th>编码</th><th>类别</th><th>名称</th><th>规格型号</th><th>单位</th><th>含量</th></tr></thead>
                <tbody>
                  <tr style=${styleMap({ height: "34px" })}><td class="idx">1</td><td>Z17280701-7</td><td class="center">主</td><td>钢骨架塑料复合管</td><td>DN90</td><td class="center">m</td><td class="right">10</td></tr>
                  <tr style=${styleMap({ height: "34px" })}><td></td><td></td><td></td><td></td><td></td><td></td><td></td></tr>
                </tbody>
              </table></div>
              ${vscroll(2, 30, 8)}
            </div>
            <div class="hscroll">
              <svg width="7" height="12" viewBox="0 0 7 12"><path d="M7 0v12L0 6z" fill="#6b6e76"/></svg>
              <div class="hthumb" style=${styleMap({ flex: "562 0 0" })}></div>
              <div style=${styleMap({ flex: "112 0 0" })}></div>
              <svg width="7" height="12" viewBox="0 0 7 12"><path d="M0 0v12l7-6z" fill="#6b6e76"/></svg>
            </div>
          </div>
        </div>
      </div>
      <div class="foot"><svg width="13" height="13" viewBox="0 0 13 13"><path d="M10 0h3v3h-3zM5 5h3v3H5zM10 5h3v3h-3zM0 10h3v3H0zM5 10h3v3H5zM10 10h3v3h-3z" fill="#aaa"/></svg></div>`;
  }
}

@customElement("app-root")
export class AppRoot extends LitElement {
  static styles = [base, css`
    :host { display: block; position: relative; height: 100vh; overflow: hidden; background: #abb4a1; padding-right: 17px; }
    .app { display: flex; flex-direction: column; height: 100%; background: #fff; }
    .body { flex: 1; min-height: 0; display: flex; }
    .window { position: absolute; left: 1249px; top: 146px; width: 1199px; height: 810px; }
    .note { position: absolute; border: 4px solid #ff2010; border-radius: 5px; pointer-events: none; }
    .note.pipe { left: 697px; top: 513px; width: 209px; height: 34px; }
    .note.quota { left: 1689px; top: 408px; width: 689px; height: 64px; }
  `];

  render() {
    return html`
      <div class="app">
        <app-header></app-header>
        <div class="body"><app-side></app-side><app-workspace></app-workspace></div>
      </div>
      <div class="note pipe"></div>
      <query-window class="window"></query-window>
      <div class="note quota"></div>`;
  }
}
